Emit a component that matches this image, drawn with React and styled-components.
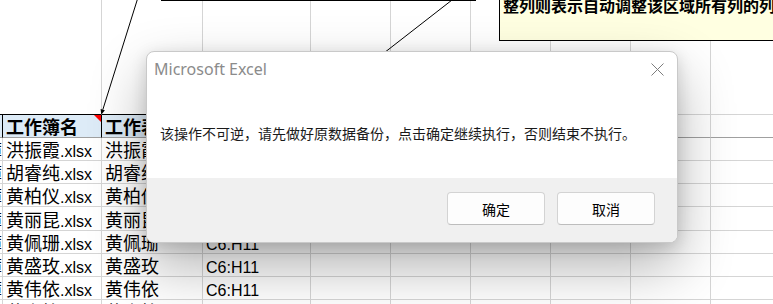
import React from "react";
import styled, { createGlobalStyle } from "styled-components";

const Global = createGlobalStyle`
  html, body { margin: 0; padding: 0; background: #fff; overflow: hidden; }
  body { width: 773px; height: 304px; font-family: "Liberation Sans", "Noto Sans CJK SC", sans-serif; }
`;

const Stage = styled.div`
  position: relative;
  width: 773px;
  height: 304px;
  overflow: hidden;
  background: #fff;
`;

const Sheet = styled.div`
  display: grid;
  grid-template-columns: 3px 99px 101px 108px repeat(6, 80px);
  grid-template-rows: 115px 23px 23px 23px 23px 24px 23px 23px 23px 23px;
`;

const Cell = styled.div`
  position: relative;
  box-sizing: border-box;
  display: flex;
  align-items: flex-end;
  justify-content: ${(p) => (p.$clip ? "flex-end" : "flex-start")};
  padding-left: ${(p) => (p.$clip ? 0 : 3)}px;
  overflow: hidden;
  white-space: nowrap;
  border-right: 1px solid ${(p) => (p.$head ? "#000" : "#d5d5d5")};
  border-bottom: 1px solid ${(p) => p.$bottom || "#d5d5d5"};
  background: ${(p) => (p.$head ? "#ddebf7" : "#fff")};
  font-size: 16px;
  font-weight: ${(p) => (p.$head ? 700 : 400)};
  color: #000;
`;

const CellText = styled.span`
  display: block;
  flex: none;
  line-height: 16.5px;
`;

const Han = styled.span`
  font-size: 18px;
`;

const CommentMark = styled.span`
  position: absolute;
  top: 0;
  right: 0;
  width: 0;
  height: 0;
  border-top: 7px solid #ff0000;
  border-left: 7px solid transparent;
`;

const TextShape = styled.div`
  position: absolute;
  left: 161px;
  top: -40px;
  width: 315px;
  height: 41px;
  box-sizing: border-box;
  background: #fff;
  border: 1px solid #000;
  z-index: 1;
`;

const NoteBox = styled.div`
  position: absolute;
  left: 499px;
  top: -30px;
  width: 320px;
  height: 71px;
  box-sizing: border-box;
  padding: 26px 0 0 3px;
  background: #ffffe1;
  border: 1px solid #000;
  z-index: 1;
  font-family: "Noto Sans CJK SC", sans-serif;
  font-weight: 700;
  font-size: 16px;
  line-height: 16px;
  white-space: nowrap;
  color: #000;
`;

const Connectors = styled.svg`
  position: absolute;
  left: 0;
  top: 0;
  z-index: 2;
  pointer-events: none;
`;

const Dialog = styled.div`
  position: absolute;
  left: 146px;
  top: 51px;
  width: 532px;
  height: 192px;
  box-sizing: border-box;
  display: flex;
  flex-direction: column;
  background: #fff;
  border: 1px solid #c9c9c9;
  border-radius: 8px;
  overflow: hidden;
  z-index: 3;
  box-shadow: 0 24px 56px rgba(0, 0, 0, 0.3), 0 4px 16px rgba(0, 0, 0, 0.14);
`;

const TitleBar = styled.div`
  box-sizing: border-box;
  height: 36px;
  display: flex;
  justify-content: space-between;
  align-items: flex-start;
  padding: 6px 13px 0 7px;
`;

const Title = styled.span`
  font-family: "Noto Sans", sans-serif;
  font-size: 16px;
  line-height: 22px;
  color: #8b8b8b;
`;

const CloseIcon = styled.svg`
  margin-top: 5px;
  display: block;
`;

const Body = styled.div`
  box-sizing: border-box;
  height: 90px;
  padding: 35px 0 0 13px;
  font-family: "Noto Sans CJK SC", sans-serif;
  font-size: 14px;
  line-height: 20px;
  color: #1a1a1a;
  white-space: nowrap;
`;

const Footer = styled.div`
  box-sizing: border-box;
  flex: 1;
  display: flex;
  justify-content: flex-end;
  align-items: flex-start;
  gap: 12px;
  padding: 14px 22px 0 0;
  background: #f0f0f0;
`;

const Button = styled.button`
  box-sizing: border-box;
  width: 98px;
  height: 33px;
  padding: 0;
  background: #fdfdfd;
  border: 1px solid #d3d3d3;
  border-bottom-color: #bdbdbd;
  border-radius: 4px;
  font-family: "Noto Sans CJK SC", sans-serif;
  font-size: 14px;
  color: #000;
`;

const names = ["洪振霞", "胡睿纯", "黄柏仪", "黄丽昆", "黄佩珊", "黄盛玫", "黄伟依", "黄嘉怡"];
const COLS = 10;

export default function App() {
  const cells = [];
  for (let c = 0; c < COLS; c++) {
    cells.push(<Cell key={`s${c}`} $bottom={c <= 3 ? "#000" : "#d5d5d5"} />);
  }
  const heads = ["", "工作簿名", "工作表名", "单元格区域"];
  for (let c = 0; c < COLS; c++) {
    const isHead = c <= 3;
    cells.push(
      <Cell key={`h${c}`} $head={isHead} $bottom="#a0a0a0" $clip={c === 0}>
        {isHead && heads[c] && (
          <CellText>
            <Han>{heads[c]}</Han>
          </CellText>
        )}
        {c === 1 && <CommentMark />}
      </Cell>
    );
  }
  names.forEach((n, r) => {
    for (let c = 0; c < COLS; c++) {
      let content = null;
      if (c === 0) content = <CellText><Han>簿</Han></CellText>;
      if (c === 1) content = <CellText><Han>{n}</Han>.xlsx</CellText>;
      if (c === 2) content = <CellText><Han>{n}</Han></CellText>;
      if (c === 3) content = <CellText>C6:H11</CellText>;
      cells.push(
        <Cell key={`r${r}c${c}`} $clip={c === 0}>
          {content}
        </Cell>
      );
    }
  });

  return (
    <Stage>
      <Global />
      <Sheet>{cells}</Sheet>
      <TextShape />
      <NoteBox>整列则表示自动调整该区域所有列的列宽。</NoteBox>
      <Connectors width="773" height="304" viewBox="0 0 773 304">
        <line x1="137.5" y1="-1" x2="102.8" y2="109.7" stroke="#000" strokeWidth="1" />
        <polygon points="101.3,114.8 104.9,110.3 100.6,109" fill="#000" />
        <line x1="452" y1="0" x2="330" y2="95" stroke="#000" strokeWidth="1" />
      </Connectors>
      <Dialog role="dialog">
        <TitleBar>
          <Title>Microsoft Excel</Title>
          <CloseIcon width="13" height="13" viewBox="0 0 13 13">
            <path d="M0.5 0.5 L12.5 12.5 M12.5 0.5 L0.5 12.5" stroke="#7d7d7d" strokeWidth="1" fill="none" />
          </CloseIcon>
        </TitleBar>
        <Body>该操作不可逆，请先做好原数据备份，点击确定继续执行，否则结束不执行。</Body>
        <Footer>
          <Button>确定</Button>
          <Button>取消</Button>
        </Footer>
      </Dialog>
    </Stage>
  );
}
